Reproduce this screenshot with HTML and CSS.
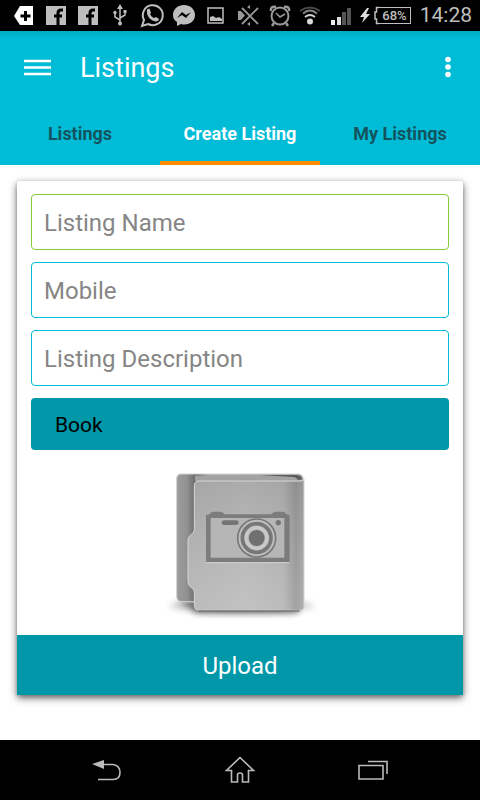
FILE: index.html
```html
<!DOCTYPE html>
<html lang="en">
<head>
<meta charset="utf-8">
<meta name="viewport" content="width=device-width, initial-scale=1">
<title>Listings</title>
<link rel="stylesheet" href="styles.css">
</head>
<body>
<div class="status-bar">
  <div class="status-icons">
    <svg viewBox="0 0 32 31"><path d="M6 16 12 6h13v19H12z" fill="#fff"/><path d="M17.500 11v10M12.500 16h10" stroke="#000" stroke-width="3"/></svg>
    <svg viewBox="0 0 32 31"><path d="M6 6h20v19H6z" fill="#bebebe"/><path d="M23 10h-2q-3 0-3 3v12M14 16h8" fill="none" stroke="#000" stroke-width="3"/></svg>
    <svg viewBox="0 0 32 31"><path d="M6 6h20v19H6z" fill="#bebebe"/><path d="M23 10h-2q-3 0-3 3v12M14 16h8" fill="none" stroke="#000" stroke-width="3"/></svg>
    <svg viewBox="0 0 32 31"><g fill="none" stroke="#bebebe" stroke-width="1.500"><path d="M16 8v15M16 20l-5-3v-4M16 18l5-3v-4"/></g><path d="M16 4l3 5h-6z" fill="#bebebe"/><circle cx="16" cy="23.500" r="2" fill="#bebebe"/><circle cx="11" cy="12.500" r="1.700" fill="#bebebe"/><path d="M19.500 10h3v3h-3z" fill="#bebebe"/></svg>
    <svg viewBox="0 0 32 31"><path d="M6 26l2-6a10 10 0 1 1 4 4z" fill="none" stroke="#bebebe" stroke-width="2"/><path d="M11 10c1-2 3-1 3 0l1 3-1 1c1 2 2 3 4 4l2-1 3 2c0 2-3 3-5 2-4-1-8-6-7-11" fill="#bebebe"/></svg>
    <svg viewBox="0 0 32 31"><path d="M16 5c-6 0-11 4-11 10 0 3 1 5 4 7v4l4-2c7 2 14-2 14-9 0-6-5-10-11-10" fill="#bebebe"/><path d="M9 18l5-6 4 3 5-3-5 6-4-3z" fill="#000"/></svg>
    <svg viewBox="0 0 32 31"><path d="M8 8h15v15H8z" fill="none" stroke="#bebebe" stroke-width="1.500"/><path d="M10 21v-4l3-1 3 2 3-1 3 2v2z" fill="#bebebe"/></svg>
    <svg viewBox="0 0 32 31"><path d="M6 11h3l4 4.500-4 4.500H6zM15 7l3-2v4zM15 24l3 2v-4z" fill="#999"/><path d="M10 8l16 16M26 8L10 24" stroke="#999" stroke-width="1.800"/></svg>
    <svg viewBox="0 0 32 31"><circle cx="16" cy="16" r="8.500" fill="none" stroke="#999" stroke-width="2"/><path d="M12 13l4 4 5-3" fill="none" stroke="#999" stroke-width="1.500"/><path d="M7 11q-1-5 5-4M25 11q1-5-5-4M10 23l-2 3M22 23l2 3" fill="none" stroke="#999" stroke-width="2.500"/></svg>
    <svg viewBox="0 0 32 31"><circle cx="14" cy="21.500" r="3" fill="#d8d8d8"/><g fill="none" stroke-width="2"><path d="M9 17q5-4 10 0" stroke="#ccc"/><path d="M7 13.500q7-6 14 0" stroke="#888"/><path d="M4 11q10-7 20 0" stroke="#484848"/></g></svg>
    <svg viewBox="0 0 32 31"><path d="M3 20h4v5H3z" fill="#eee"/><path d="M9 17h4v8H9z" fill="#ddd"/><path d="M14 12h4v13h-4z" fill="#555"/><path d="M19 8h4v17h-4z" fill="#555"/></svg>
  </div>
  <div class="battery">
    <svg class="bolt" viewBox="0 0 14 31"><path d="M7 8 0 17h4l-2 6 8-9H6l3-6z" fill="#ddd"/></svg>
    <svg class="battery-tip" viewBox="0 0 5 31"><path d="M5 7.500H2.500V12H1v7h1.500v4.500H5" fill="none" stroke="#bebebe" stroke-width="1.500"/></svg>
    <span class="battery-level">68%</span>
  </div>
  <time class="clock">14:28</time>
</div>

<header class="app-header">
  <div class="toolbar">
    <button class="icon-button" type="button" aria-label="Open menu">
      <svg width="27" height="17" viewBox="0 0 27 17"><path d="M0 2h27M0 8.500h27M0 15h27" stroke="#fff" stroke-width="2.300"/></svg>
    </button>
    <h1 class="title">Listings</h1>
    <button class="icon-button" type="button" aria-label="More options">
      <svg width="6" height="22" viewBox="0 0 6 22"><g fill="#fff"><circle cx="3" cy="3.500" r="2.800"/><circle cx="3" cy="11" r="2.800"/><circle cx="3" cy="18.500" r="2.800"/></g></svg>
    </button>
  </div>
  <nav class="tabs">
    <a class="tab" href="#listings">Listings</a>
    <a class="tab tab-active" href="#create" aria-current="page">Create Listing</a>
    <a class="tab" href="#mine">My Listings</a>
  </nav>
</header>

<main class="content">
  <form class="card">
    <div class="fields">
      <input class="field field-focus" type="text" placeholder="Listing Name" aria-label="Listing Name">
      <input class="field" type="tel" placeholder="Mobile" aria-label="Mobile">
      <input class="field" type="text" placeholder="Listing Description" aria-label="Listing Description">
      <select class="category" aria-label="Category"><option>Book</option></select>
    </div>
    <button class="photo" type="button" aria-label="Add photo">
      <svg width="180" height="170" viewBox="0 0 540 510">
        <defs>
          <linearGradient id="back" x1="0" x2="1" y1="0" y2="0"><stop offset="0" stop-color="#9d9d9d"/><stop offset=".08" stop-color="#929292"/><stop offset=".15" stop-color="#6a6a6a"/><stop offset=".25" stop-color="#a8a8a8"/><stop offset="1" stop-color="#a0a0a0"/></linearGradient>
          <linearGradient id="front" x1="0" x2="1" y1="0" y2="0"><stop offset="0" stop-color="#b4b4b4"/><stop offset=".5" stop-color="#bcbcbc"/><stop offset=".82" stop-color="#b5b5b5"/><stop offset=".93" stop-color="#969696"/><stop offset="1" stop-color="#a6a6a6"/></linearGradient>
          <linearGradient id="shade" x1="0" x2="0" y1="0" y2="1"><stop offset="0" stop-color="#777" stop-opacity=".25"/><stop offset="1" stop-color="#ddd" stop-opacity=".18"/></linearGradient>
          <filter id="soft" x="-20%" y="-100%" width="140%" height="300%"><feGaussianBlur stdDeviation="9"/></filter>
        </defs>
        <ellipse cx="275" cy="438" rx="218" ry="20" fill="#777" opacity=".35" filter="url(#soft)"/>
        <path d="M80 423h60l310 20-10 15H145q-15 0-20-15z" fill="#222" opacity=".7" filter="url(#soft)"/>
        <path d="M94 42H445q15 0 15 18v20H160v345H97q-17 0-17-17V57q0-15 14-15z" fill="url(#back)" stroke="#d0d0d0" stroke-width="3"/>
        <path d="M135 47h305q15 1 15 12l-8 4H135z" fill="#a2a2a2"/>
        <path d="M330 45h110q16 2 16 14h-14q-2-8-12-8z" fill="#5c5c5c"/>
        <path d="M147 63h303q12 0 12-7v382q0 13-12 13H148q-15 0-15-15v-38q0-12-12-18-7-5-7-18V241q0-10 8-16 11-7 11-16V78q0-15 14-15z" fill="url(#front)"/>
        <path d="M147 63h303q12 0 12-7v382q0 13-12 13H148q-15 0-15-15v-38q0-12-12-18-7-5-7-18V241q0-10 8-16 11-7 11-16V78q0-15 14-15z" fill="url(#shade)" stroke="#d6d6d6" stroke-width="3"/>
        <path d="M145 453h304" stroke="#777" stroke-width="5"/>
        <path d="M168 306V166l10-3q3-8 12-8h21q8 0 13 8h140q5-8 13-8h21q8 0 11 8l10 3v140z" fill="#7c7c7c"/>
        <path d="M182 174h221v119H182z" fill="#b6b6b6"/>
        <path d="M168 308h251" stroke="#d0d0d0" stroke-width="3"/>
        <rect x="215" y="181" width="51" height="14" rx="7" fill="#757575"/>
        <circle cx="385" cy="188" r="8" fill="#757575"/>
        <circle cx="320" cy="234" r="57" fill="#bebebe" stroke="#777" stroke-width="5"/>
        <circle cx="320" cy="234" r="43" fill="none" stroke="#777" stroke-width="11"/>
        <circle cx="320" cy="234" r="31" fill="none" stroke="#cacaca" stroke-width="7"/>
        <circle cx="320" cy="234" r="24" fill="#707070"/>
      </svg>
    </button>
    <button class="upload" type="submit">Upload</button>
  </form>
</main>

<footer class="nav-bar">
  <button class="nav-button" type="button" aria-label="Back">
    <svg width="32" height="24" viewBox="0 0 32 24"><path d="M1 6l12-4v9z" fill="#bbb"/><path d="M12 6.500h10q7 1 7 8t-7 7H7" fill="none" stroke="#bbb" stroke-width="1.600"/></svg>
  </button>
  <button class="nav-button" type="button" aria-label="Home">
    <svg width="32" height="28" viewBox="0 0 32 28"><path d="M16 1.500 2.500 14.500H7.500V26h6v-7q0-2 2.500-2t2.500 2v7h6V14.500h5z" fill="none" stroke="#bbb" stroke-width="1.600"/></svg>
  </button>
  <button class="nav-button" type="button" aria-label="Recent apps">
    <svg width="32" height="22" viewBox="0 0 32 22"><path d="M2 6.500h24V20H2zM11 2.500h19V15" fill="none" stroke="#bbb" stroke-width="1.600"/></svg>
  </button>
</footer>
</body>
</html>
```

FILE: styles.css
```css
* {
  box-sizing: border-box;
}

body {
  display: flex;
  flex-direction: column;
  min-height: 100vh;
  margin: 0;
  background: #fff;
  font-family: Roboto, sans-serif;
}

button,
input,
select {
  margin: 0;
  padding: 0;
  border: 0;
  border-radius: 0;
  background: none;
  font: inherit;
}

svg {
  display: block;
}

.status-bar {
  display: flex;
  align-items: center;
  height: 31px;
  padding: 0 8px;
  background: #000;
  color: #bebebe;
}

.status-icons {
  display: flex;
}

.status-icons svg {
  width: 32px;
  height: 31px;
}

.battery {
  display: flex;
  align-items: center;
}

.bolt {
  width: 14px;
  height: 31px;
}

.battery-tip {
  width: 5px;
  height: 31px;
}

.battery-level {
  width: 32px;
  border: 1px solid #bebebe;
  border-left: 0;
  font-size: 13px;
  font-weight: 500;
  line-height: 15px;
  text-align: center;
}

.clock {
  margin-left: auto;
  font-size: 21px;
  line-height: 31px;
}

.app-header {
  background: linear-gradient(#00acc4, #00bcd6 8px);
}

.toolbar {
  display: flex;
  align-items: center;
  height: 72px;
  padding: 0 24px;
}

.icon-button {
  padding: 5px 0;
}

.icon-button:last-child {
  padding: 5px;
}

.title {
  flex: 1;
  margin: 0;
  padding: 2px 0 0 29px;
  color: #fff;
  font-size: 27px;
  font-weight: 400;
}

.tabs {
  display: grid;
  grid-template-columns: repeat(3, 1fr);
}

.tab {
  height: 62px;
  border-bottom: 4px solid transparent;
  color: #13545e;
  font-size: 18px;
  font-weight: 700;
  line-height: 62px;
  text-align: center;
  text-decoration: none;
}

.tab-active {
  border-color: #fb8c00;
  color: #fff;
}

.content {
  flex: 1;
  padding: 16px 17px 45px;
}

.card {
  display: flex;
  flex-direction: column;
  border-radius: 2px;
  background: #fff;
  box-shadow: 0 3px 8px rgba(0, 0, 0, 0.5), 0 2px 4px rgba(0, 0, 0, 0.25);
}

.fields {
  display: grid;
  gap: 12px;
  padding: 13px 14px 0;
}

.field {
  width: 100%;
  height: 56px;
  padding: 2px 12px 0;
  border: 1px solid #00bcd6;
  border-radius: 4px;
  background: #fff;
  font-size: 24px;
}

.field::placeholder {
  color: #868686;
  opacity: 1;
}

.field-focus {
  border-color: #84cb35;
}

.category {
  appearance: none;
  width: 100%;
  height: 52px;
  padding: 2px 24px 0;
  border-radius: 4px;
  background: #0097a9;
  color: #000;
  font-size: 21px;
}

.photo {
  align-self: center;
  padding: 10px 0 5px;
}

.upload {
  height: 60px;
  padding-top: 2px;
  background: #0097a9;
  color: #fff;
  font-size: 24px;
}

.nav-bar {
  display: flex;
  justify-content: center;
  height: 60px;
  background: #000;
}

.nav-button {
  display: grid;
  place-items: center;
  width: 133px;
}
```
